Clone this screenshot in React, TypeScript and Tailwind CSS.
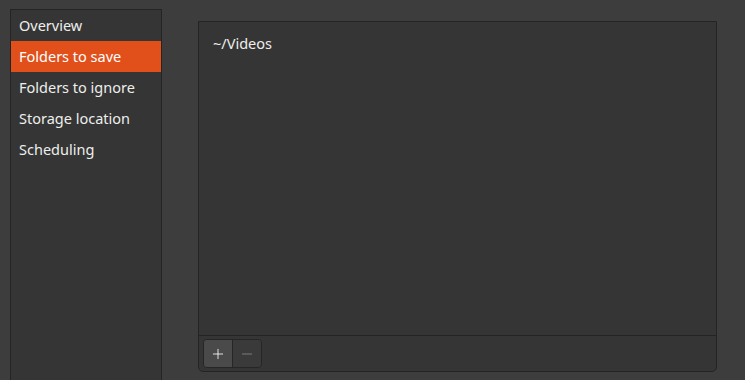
import { Plus, Minus } from 'lucide-react'

const pages = ['Overview', 'Folders to save', 'Folders to ignore', 'Storage location', 'Scheduling']

export default function App() {
  const active = 1
  return (
    <div
      className="w-[745px] h-[380px] bg-[#3d3d3d] flex overflow-hidden text-[#eeeeec]"
      style={{ fontFamily: '"Noto Sans", "Open Sans", sans-serif' }}
    >
      {/* Sidebar */}
      <div className="ml-[10px] mt-[9px] w-[152px] bg-[#353535] border-l border-t border-r border-[#242424] flex flex-col">
        {pages.map((p, i) => (
          <div
            key={p}
            className={
              i === active
                ? 'h-[31px] pl-[8px] flex items-center text-[14.5px] bg-[#e1501b] text-white'
                : 'h-[31px] pl-[8px] flex items-center text-[14.5px]'
            }
          >
            {p}
          </div>
        ))}
      </div>

      {/* Folder list */}
      <div className="ml-[36px] mt-[21px] mb-[8px] w-[519px] bg-[#353535] border border-[#242424] rounded-b-[5px] flex flex-col">
        <div className="flex-1 px-[14px] pt-[11px] text-[14.5px]">~/Videos</div>
        <div className="h-[36px] border-t border-[#242424] px-[4px] pt-[3px]">
          <div className="flex w-[59px] h-[29px] border border-[#262626] rounded-[4px] overflow-hidden">
            <button type="button" className="w-[29px] h-full bg-[#4a4a4a] border-r border-[#262626] flex items-center justify-center">
              <Plus className="w-[16px] h-[16px] text-white" strokeWidth={1.25} />
            </button>
            <button type="button" className="flex-1 h-full bg-[#3a3a3a] flex items-center justify-center">
              <Minus className="w-[16px] h-[16px] text-[#8a8a8a]" strokeWidth={1.25} />
            </button>
          </div>
        </div>
      </div>
    </div>
  )
}
